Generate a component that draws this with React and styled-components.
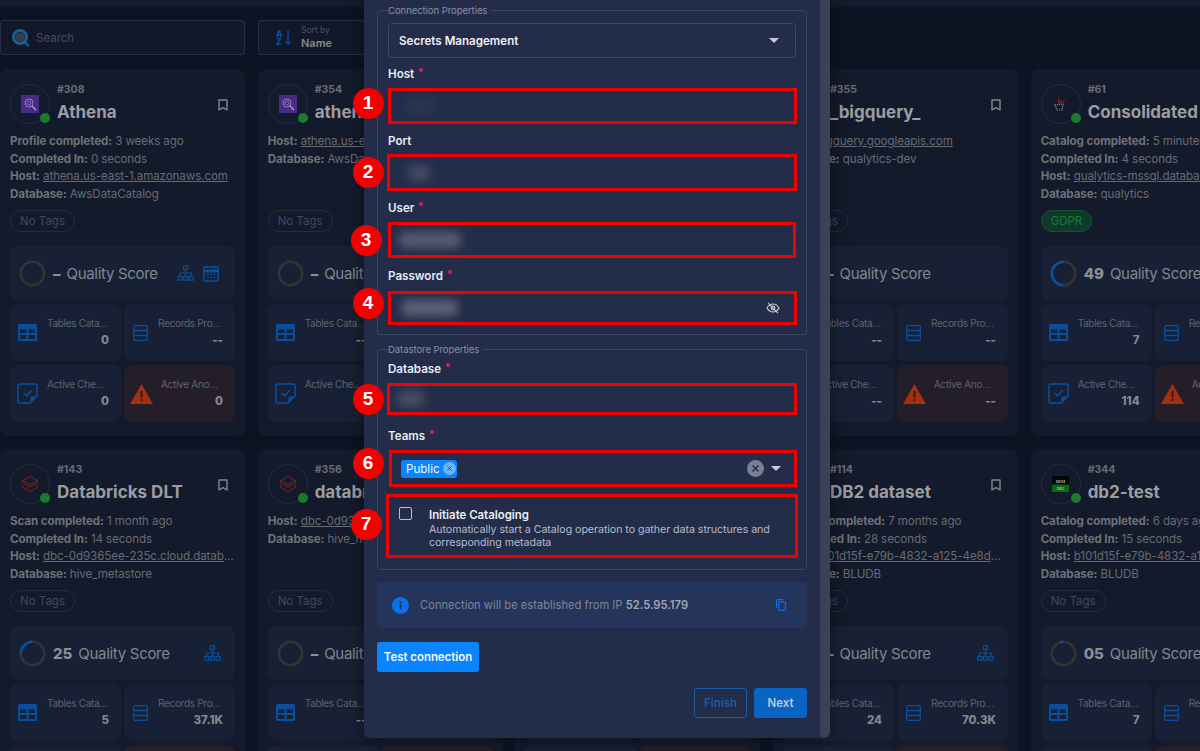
import React from 'react';
import styled, { createGlobalStyle } from 'styled-components';

const GlobalStyle = createGlobalStyle`
html, body {
  margin: 0;
  width: 100%;
  height: 100%;
  overflow: hidden;
  background: #0d1322;
}
#root {
  width: 100%;
  height: 100%;
}
* {
  box-sizing: border-box;
}
`;

const Page = styled.div`
  position: relative;
  width: 1200px;
  height: 751px;
  overflow: hidden;
  font-family: Inter, "Liberation Sans", sans-serif;
`;

const TopBar = styled.div`
  height: 7px;
  background: #141a2c;
`;

const Toolbar = styled.div`
  display: flex;
  gap: 13px;
  padding-top: 13px;
  height: 62px;
`;

const ToolBox = styled.div`
  display: flex;
  align-items: center;
  width: 245px;
  height: 35px;
  background: #121829;
  border: 1px solid #272f44;
  border-radius: 3px;
  padding-left: ${(p) => p.$pad}px;
`;

const SearchText = styled.span`
  margin-left: 5px;
  font-size: 11.5px;
  color: #454b5c;
`;

const SortText = styled.div`
  display: flex;
  flex-direction: column;
  margin-left: 9px;
`;

const SortLabel = styled.span`
  font-size: 8.5px;
  line-height: 11px;
  color: #4c5262;
`;

const SortValue = styled.span`
  font-size: 11px;
  line-height: 14px;
  font-weight: 600;
  color: #85888f;
`;

const CardGrid = styled.div`
  display: grid;
  grid-template-columns: repeat(5, 245px);
  column-gap: 12.67px;
  row-gap: 13px;
`;

const Card = styled.div`
  height: 367px;
  padding: 15px 10px 0;
  background: #131a2b;
  border-radius: 8px;
`;

const CardHeader = styled.div`
  display: flex;
  height: 40px;
`;

const Avatar = styled.div`
  position: relative;
  flex: none;
  display: flex;
  align-items: center;
  justify-content: center;
  width: 40px;
  height: 40px;
  border: 1px solid #252c3e;
  border-radius: 50%;
`;

const StatusDot = styled.span`
  position: absolute;
  right: -1px;
  bottom: 0;
  width: 10px;
  height: 10px;
  border-radius: 50%;
  background: #1a7a2e;
`;

const NameColumn = styled.div`
  min-width: 0;
  margin-left: 7px;
  margin-top: -1px;
`;

const CardId = styled.div`
  font-size: 10.5px;
  line-height: 14px;
  font-weight: 700;
  color: #6a6c73;
`;

const CardName = styled.div`
  margin-top: 3px;
  width: 155px;
  font-size: 17px;
  line-height: 24px;
  font-weight: 700;
  white-space: nowrap;
  color: #9c9da1;
`;

const BookmarkSlot = styled.div`
  display: flex;
  align-items: center;
  margin-left: auto;
  padding-right: 7px;
  margin-top: 1px;
`;

const InfoList = styled.div`
  height: 70px;
  margin-top: 9px;
`;

const InfoLine = styled.div`
  font-size: 11.6px;
  line-height: 17.6px;
  color: #696b72;
  white-space: nowrap;
  overflow: hidden;
  text-overflow: ellipsis;
  letter-spacing: -0.1px;
`;

const InfoKey = styled.b`
  font-weight: 700;
  color: #6f7177;
`;

const InfoLink = styled.span`
  text-decoration: underline;
`;

const Tag = styled.span`
  display: inline-flex;
  align-items: center;
  height: 22px;
  margin-top: 7px;
  padding: 0 9px;
  border-radius: 11px;
  font-size: 11.5px;
  border: 1px solid ${(p) => (p.$green ? '#14532f' : '#252c3e')};
  background: ${(p) => (p.$green ? '#0f3a29' : 'transparent')};
  color: ${(p) => (p.$green ? '#137a3a' : '#3f4860')};
`;

const QualityPanel = styled.div`
  display: flex;
  align-items: center;
  height: 54px;
  margin-top: 14px;
  padding: 0 14px 0 9px;
  background: #172035;
  border-radius: 8px;
`;

const QualityScore = styled.b`
  margin-left: 7px;
  font-size: 15px;
  font-weight: 800;
  color: #8d8f95;
`;

const QualityLabel = styled.span`
  margin-left: 6px;
  font-size: 15px;
  letter-spacing: -0.3px;
  white-space: nowrap;
  color: #82868f;
`;

const QualityIcons = styled.div`
  display: flex;
  align-items: center;
  gap: 9px;
  margin-left: auto;
  padding-right: ${(p) => (p.$double ? 2 : 0)}px;
`;

const StatGrid = styled.div`
  display: grid;
  grid-template-columns: 111px 111px;
  grid-auto-rows: 57px;
  gap: 4px 3px;
  margin-top: 4px;
`;

const StatTile = styled.div`
  display: flex;
  align-items: center;
  padding: 0 12px 0 ${(p) => p.$pad}px;
  border-radius: 8px;
  background: ${(p) => (p.$alert ? '#231e29' : '#172035')};
`;

const StatBody = styled.div`
  flex: 1;
  min-width: 0;
  margin-top: -2px;
  display: flex;
  flex-direction: column;
  align-items: flex-end;
`;

const StatTitle = styled.div`
  max-width: ${(p) => p.$max}px;
  font-size: 10px;
  line-height: 14px;
  margin-bottom: 3px;
  letter-spacing: -0.3px;
  white-space: nowrap;
  overflow: hidden;
  text-overflow: ellipsis;
  color: #5f636e;
`;

const StatValue = styled.div`
  font-size: 11.5px;
  line-height: 14px;
  font-weight: 800;
  color: #85878d;
`;

const Modal = styled.div`
  position: absolute;
  left: 364px;
  top: 0;
  width: 466px;
  height: 738px;
  display: flex;
  overflow: hidden;
  background: #232c48;
  border-radius: 0 0 6px 6px;
  box-shadow: 0 0 18px rgba(0, 0, 0, 0.45);
`;

const ModalBody = styled.div`
  width: 456px;
  padding: 4px 13px 0;
`;

const ScrollTrack = styled.div`
  width: 10px;
  height: 100%;
  background: #3a4258;
  border-radius: 0 0 5px 5px;
`;

const Group = styled.fieldset`
  margin: ${(p) => p.$top}px 0 0;
  padding: 0 10px ${(p) => p.$bottom}px;
  min-width: 0;
  border: 1px solid #3c4560;
  border-radius: 4px;
`;

const GroupTitle = styled.legend`
  padding: 1px 3px 0 0;
  margin-left: 0;
  font-size: 9.6px;
  line-height: 12px;
  letter-spacing: -0.1px;
  color: #8a90a1;
`;

const SelectBox = styled.div`
  display: flex;
  align-items: center;
  justify-content: space-between;
  height: 35px;
  margin-top: 6px;
  padding: 0 16px 0 10px;
  border: 1px solid #3f4860;
  border-radius: 4px;
  font-size: 11.6px;
  font-weight: 600;
  color: #eef0f5;
`;

const Caret = styled.span`
  display: inline-block;
  width: 0;
  height: 0;
  border-left: 5px solid transparent;
  border-right: 5px solid transparent;
  border-top: 5px solid #c7cbd8;
`;

const FieldLabel = styled.div`
  display: flex;
  height: 16px;
  margin-top: ${(p) => p.$top}px;
  font-size: 11.6px;
  line-height: 16px;
  font-weight: 600;
  color: #e8ebf2;
`;

const RequiredDot = styled.span`
  width: 4px;
  height: 4px;
  margin: 2px 0 0 5px;
  border-radius: 50%;
  background: #e0195f;
`;

const Highlight = styled.div`
  display: flex;
  align-items: center;
  height: ${(p) => p.$height}px;
  margin: ${(p) => p.$top}px ${(p) => p.$right ?? -1}px 0 ${(p) => p.$left ?? 0}px;
  border: 3px solid #f50000;
`;

const BlurredValue = styled.span`
  display: block;
  width: ${(p) => p.$width}px;
  height: 16px;
  margin-left: ${(p) => p.$left}px;
  background: #6a7084;
  opacity: ${(p) => p.$strength};
  filter: blur(5px);
  border-radius: 4px;
`;

const EyeSlot = styled.div`
  display: flex;
  margin-left: auto;
  margin-right: 14px;
`;

const Chip = styled.span`
  display: flex;
  align-items: center;
  height: 18px;
  margin-left: 9px;
  padding: 0 1px 0 5px;
  gap: 3px;
  background: #0a84ff;
  border-radius: 3px;
  font-size: 11.6px;
  color: #f0f6ff;
`;

const ClearSlot = styled.div`
  display: flex;
  margin-left: auto;
  margin-right: 7px;
`;

const CaretSlot = styled.div`
  display: flex;
  margin-right: 13px;
`;

const CatalogRow = styled.div`
  display: flex;
  height: 64px;
  margin: 7px -2px 0 -2px;
  padding: 11px 20px 0 10px;
  border: 3px solid #f50000;
`;

const CheckBox = styled.span`
  flex: none;
  width: 13px;
  height: 13px;
  margin-top: -1px;
  border: 1.5px solid #bdc1cc;
  border-radius: 2px;
`;

const CatalogText = styled.div`
  margin-left: 17px;
`;

const CatalogTitle = styled.div`
  font-size: 11.4px;
  line-height: 14px;
  font-weight: 600;
  color: #eef0f5;
`;

const CatalogHint = styled.div`
  margin-top: 2px;
  font-size: 10.65px;
  line-height: 12.5px;
  letter-spacing: -0.05px;
  color: #b4bccd;
`;

const InfoBar = styled.div`
  display: flex;
  align-items: center;
  height: 46px;
  margin-top: 12px;
  padding: 0 21px 0 15px;
  background: #24345a;
  border-radius: 4px;
  font-size: 11.2px;
  color: #7d8698;
`;

const InfoMessage = styled.span`
  margin-left: 11px;
`;

const IpAddress = styled.b`
  font-weight: 600;
  color: #a1a6b3;
`;

const CopySlot = styled.div`
  display: flex;
  margin-left: auto;
`;

const TestButton = styled.button`
  display: block;
  width: 102px;
  height: 30px;
  margin-top: 14px;
  padding: 0;
  border: 0;
  border-radius: 3px;
  background: #0a84ff;
  font-family: inherit;
  font-size: 11.4px;
  font-weight: 600;
  color: #f5f9ff;
`;

const FooterRow = styled.div`
  display: flex;
  justify-content: flex-end;
  gap: 7px;
  margin-top: 16px;
`;

const FooterButton = styled.button`
  width: 53px;
  height: 30px;
  padding: 0;
  border-radius: 3px;
  border: 1px solid ${(p) => (p.$solid ? '#0a64c4' : '#1a5aa8')};
  background: ${(p) => (p.$solid ? '#0a64c4' : 'transparent')};
  font-family: inherit;
  font-size: 11.4px;
  font-weight: 600;
  color: ${(p) => (p.$solid ? '#bcc8d8' : '#1e5aa3')};
`;

const StepBadge = styled.span`
  position: absolute;
  left: ${(p) => p.$x - 15.5}px;
  top: ${(p) => p.$y - 15.5}px;
  display: flex;
  align-items: center;
  justify-content: center;
  width: 31px;
  height: 31px;
  border-radius: 50%;
  background: #f50000;
  font-family: "Liberation Sans", Arial, sans-serif;
  font-size: 19px;
  font-weight: 700;
  color: #fff;
`;

const blue = '#0a4f9e';

function SearchIcon() {
  return (
    <svg width="20" height="20" viewBox="0 0 20 20" fill="none">
      <circle cx="9" cy="9" r="6.5" stroke="#1b5f8f" strokeWidth="3" />
      <circle cx="9" cy="9" r="4.6" fill="#343c4e" />
      <path d="M13.5 14l3.5 3.5" stroke="#1b5f8f" strokeWidth="2.4" strokeLinecap="round" />
    </svg>
  );
}

function SortIcon() {
  return (
    <svg width="16" height="17" viewBox="0 0 16 17" fill="none">
      <text x="0" y="7.5" fontSize="8.5" fontWeight="800" fontFamily="Inter, sans-serif" fill={blue}>A</text>
      <text x="0" y="16" fontSize="8.5" fontWeight="800" fontFamily="Inter, sans-serif" fill={blue}>Z</text>
      <path d="M12 1v14M9.4 12.4L12 15l2.6-2.6" stroke={blue} strokeWidth="1.3" />
    </svg>
  );
}

function BookmarkIcon() {
  return (
    <svg width="10" height="12" viewBox="0 0 10 12" fill="none">
      <path d="M1 1h8v10L5 8.6 1 11z" stroke="#85878d" strokeWidth="1.4" strokeLinejoin="round" />
    </svg>
  );
}

function AthenaLogo() {
  return (
    <svg width="18" height="18" viewBox="0 0 18 18">
      <rect width="18" height="18" fill="#472c86" />
      <circle cx="8" cy="8" r="4" fill="none" stroke="#a795cf" strokeWidth="0.8" />
      <circle cx="8" cy="8" r="1.8" fill="none" stroke="#a795cf" strokeWidth="0.6" />
      <path d="M11 11l4 4" stroke="#b9aad9" strokeWidth="1.1" />
    </svg>
  );
}

function DatabricksLogo() {
  return (
    <svg width="18" height="18" viewBox="0 0 18 18" fill="none" stroke="#8a2418" strokeWidth="0.9">
      <path d="M1.5 5.5L9 1.5l7.5 4L9 9.5z" />
      <path d="M1.5 5.5v2.2L9 12l7.5-4.300V5.500" />
      <path d="M1.500 10v2.200L9 16.500l7.500-4.300V10" />
    </svg>
  );
}

function ConsolidatedLogo() {
  return (
    <svg width="16" height="18" viewBox="0 0 16 18" fill="none">
      <path d="M5 1l2 5 7-1-6 3-3 1z" fill="#7d1d14" />
      <path d="M2 10l8-1-1 6H4z" stroke="#7c808a" strokeWidth="1.200" strokeDasharray="1.200 0.800" />
    </svg>
  );
}

function DbTwoLogo() {
  return (
    <svg width="17" height="16" viewBox="0 0 17 16">
      <rect width="17" height="16" rx="2" fill="#050505" />
      <rect y="8.500" width="17" height="7.500" rx="1" fill="#0a6b14" />
      <text x="8.500" y="6.500" textAnchor="middle" fontSize="4.800" fontWeight="700" fontFamily="Liberation Serif, serif" fill="#b0b0b0">IBM</text>
      <text x="8.500" y="14" textAnchor="middle" fontSize="4" fontWeight="700" fontFamily="Liberation Serif, serif" fill="#9ac09a">DB2</text>
    </svg>
  );
}

const logos = {
  athena: AthenaLogo,
  databricks: DatabricksLogo,
  consolidated: ConsolidatedLogo,
  db2: DbTwoLogo,
};

function ScoreRing({ score }) {
  const length = 2 * Math.PI * 11.7;
  const filled = score ? (score / 100) * length : 0;
  return (
    <svg width="27" height="27" viewBox="0 0 27 27" fill="none" style={{ flex: 'none' }}>
      <circle cx="13.500" cy="13.500" r="11.700" stroke="#33342f" strokeWidth="2.600" />
      <circle
        cx="13.500"
        cy="13.500"
        r="11.700"
        stroke={blue}
        strokeWidth="2.600"
        strokeDasharray={`${filled} ${length}`}
        transform="translate(27 0) scale(-1 1) rotate(-90 13.500 13.500)"
      />
    </svg>
  );
}

function HierarchyIcon() {
  return (
    <svg width="17" height="16" viewBox="0 0 17 16" fill="none" stroke={blue} strokeWidth="1.200">
      <rect x="6.500" y="0.800" width="4" height="3.600" />
      <rect x="0.800" y="11.500" width="4" height="3.600" />
      <rect x="6.500" y="11.500" width="4" height="3.600" />
      <rect x="12.200" y="11.500" width="4" height="3.600" />
      <path d="M8.500 4.400v7M2.800 11.500V8h11.400v3.500" />
    </svg>
  );
}

function CalendarIcon() {
  return (
    <svg width="16" height="17" viewBox="0 0 16 17" fill="none">
      <rect x="0.800" y="2" width="14.400" height="14" rx="1.500" stroke={blue} strokeWidth="1.500" />
      <path d="M0.800 6h14.400" stroke={blue} strokeWidth="3" />
      <path d="M4 0.500v2.500M12 0.500v2.500" stroke={blue} strokeWidth="1.400" />
      <path d="M4 9.500h1.600M7.200 9.500h1.600M10.400 9.500H12M4 12.500h1.600M7.200 12.500h1.600M10.400 12.500H12" stroke={blue} strokeWidth="1.400" />
    </svg>
  );
}

function TableIcon() {
  return (
    <svg width="19" height="17" viewBox="0 0 19 17" style={{ flex: 'none' }}>
      <path
        fill={blue}
        fillRule="evenodd"
        d="M1.500 0h16A1.500 1.500 0 0 1 19 1.500v14a1.500 1.500 0 0 1-1.500 1.500h-16A1.500 1.500 0 0 1 0 15.500v-14A1.500 1.500 0 0 1 1.500 0zM2 5.500V9h6.500V5.500zm8.500 0V9H17V5.500zM2 11v4h6.500v-4zm8.500 0v4H17v-4z"
      />
    </svg>
  );
}

function RecordsIcon() {
  return (
    <svg width="15" height="16" viewBox="0 0 15 16" fill="none" stroke={blue} strokeWidth="1.300" style={{ flex: 'none' }}>
      <rect x="0.700" y="0.700" width="13.600" height="14.600" rx="1.500" />
      <path d="M0.700 5.500h13.600M0.700 10.500h13.600" />
    </svg>
  );
}

function CheckIcon() {
  return (
    <svg width="21" height="21" viewBox="0 0 21 21" fill="none" style={{ flex: 'none' }}>
      <path
        d="M3 1h15a2 2 0 0 1 2 2v10l-7 7H3a2 2 0 0 1-2-2V3a2 2 0 0 1 2-2z"
        stroke={blue}
        strokeWidth="1.500"
      />
      <path d="M13.500 20v-5.500a1 1 0 0 1 1-1H20z" fill={blue} />
      <path d="M6.500 10l3 2.800L14.500 7.500" stroke={blue} strokeWidth="1.700" />
    </svg>
  );
}

function WarningIcon() {
  return (
    <svg width="23" height="20" viewBox="0 0 23 20" style={{ flex: 'none' }}>
      <path d="M11.500 0L23 20H0z" fill="#a2300f" />
      <rect x="10.500" y="7" width="2" height="6.500" fill="#231e29" />
      <rect x="10.500" y="15" width="2" height="2" fill="#231e29" />
    </svg>
  );
}

function EyeOffIcon() {
  return (
    <svg width="14" height="12" viewBox="0 0 14 12" fill="none" stroke="#c5cad6" strokeWidth="1.200">
      <path d="M1 6c1.500-2.500 3.500-4 6-4s4.500 1.500 6 4c-1.500 2.500-3.500 4-6 4S2.500 8.500 1 6z" />
      <circle cx="7" cy="6" r="1.800" />
      <path d="M2 0.800l10 10.400" />
    </svg>
  );
}

function ChipCloseIcon() {
  return (
    <svg width="13" height="13" viewBox="0 0 13 13" fill="none">
      <circle cx="6.500" cy="6.500" r="6.500" fill="#6cb4f8" />
      <path d="M4.300 4.300l4.400 4.400M8.700 4.300l-4.400 4.400" stroke="#0a5cb8" strokeWidth="1" />
    </svg>
  );
}

function ClearIcon() {
  return (
    <svg width="17" height="17" viewBox="0 0 17 17" fill="none">
      <circle cx="8.500" cy="8.500" r="8.500" fill="#7a8093" />
      <path d="M5.500 5.500l6 6M11.500 5.500l-6 6" stroke="#232c48" strokeWidth="1.400" />
    </svg>
  );
}

function InfoIcon() {
  return (
    <svg width="17" height="17" viewBox="0 0 17 17" style={{ flex: 'none' }}>
      <circle cx="8.500" cy="8.500" r="8.500" fill="#0a6fe8" />
      <rect x="7.600" y="7.200" width="1.800" height="5.300" fill="#1e2b4e" />
      <rect x="7.600" y="4.300" width="1.800" height="1.800" fill="#1e2b4e" />
    </svg>
  );
}

function CopyIcon() {
  return (
    <svg width="10" height="12" viewBox="0 0 10 12" fill="none" stroke="#0a6fe8" strokeWidth="1.200">
      <rect x="2.800" y="2.800" width="6.500" height="8.600" rx="0.800" />
      <path d="M0.600 9V1.400a0.800 0.800 0 0 1 0.800-0.800H7" />
    </svg>
  );
}

const cards = [
  {
    id: '#308',
    name: 'Athena',
    logo: 'athena',
    info: [
      ['Profile completed:', '3 weeks ago'],
      ['Completed In:', '0 seconds'],
      ['Host:', 'athena.us-east-1.amazonaws.com', true],
      ['Database:', 'AwsDataCatalog'],
    ],
    icons: ['tree', 'calendar'],
    stats: ['0', '--', '0', '0'],
  },
  {
    id: '#354',
    name: 'athena_test',
    logo: 'athena',
    info: [
      ['Host:', 'athena.us-east-1.amazonaws.com', true],
      ['Database:', 'AwsDataCatalog'],
    ],
    stats: ['--', '--', '--', '--'],
  },
  {
    id: '#352',
    name: 'bigquery',
    logo: 'db2',
    info: [['Database:', 'qualytics-dev']],
    stats: ['--', '--', '--', '--'],
  },
  {
    id: '#355',
    name: '_bigquery_',
    logo: 'db2',
    info: [
      ['Host:', 'bigquery.googleapis.com', true],
      ['Database:', 'qualytics-dev'],
    ],
    stats: ['--', '--', '--', '--'],
  },
  {
    id: '#61',
    name: 'Consolidated Balance',
    logo: 'consolidated',
    info: [
      ['Catalog completed:', '5 minutes ago'],
      ['Completed In:', '4 seconds'],
      ['Host:', 'qualytics-mssql.database.windows.net', true],
      ['Database:', 'qualytics'],
    ],
    tag: 'GDPR',
    score: 49,
    stats: ['7', '--', '114', '--'],
  },
  {
    id: '#143',
    name: 'Databricks DLT',
    logo: 'databricks',
    info: [
      ['Scan completed:', '1 month ago'],
      ['Completed In:', '14 seconds'],
      ['Host:', 'dbc-0d9365ee-235c.cloud.databricks.com', true],
      ['Database:', 'hive_metastore'],
    ],
    score: 25,
    icons: ['tree'],
    stats: ['5', '37.1K', '--', '--'],
  },
  {
    id: '#356',
    name: 'databricks_test',
    logo: 'databricks',
    info: [
      ['Host:', 'dbc-0d9365ee-235c.cloud.databricks.com', true],
      ['Database:', 'hive_metastore'],
    ],
    stats: ['--', '--', '--', '--'],
  },
  {
    id: '#353',
    name: 'db2',
    logo: 'db2',
    info: [['Database:', 'BLUDB']],
    stats: ['--', '--', '--', '--'],
  },
  {
    id: '#114',
    name: 'DB2 dataset',
    logo: 'db2',
    info: [
      ['Profile completed:', '7 months ago'],
      ['Completed In:', '28 seconds'],
      ['Host:', 'b101d15f-e79b-4832-a125-4e8d4d1f0c2a.databases', true],
      ['Database:', 'BLUDB'],
    ],
    icons: ['tree'],
    stats: ['24', '70.3K', '--', '--'],
  },
  {
    id: '#344',
    name: 'db2-test',
    logo: 'db2',
    info: [
      ['Catalog completed:', '6 days ago'],
      ['Completed In:', '15 seconds'],
      ['Host:', 'b101d15f-e79b-4832-a125-4e8d4d1f0c2a.databases', true],
      ['Database:', 'BLUDB'],
    ],
    score: 5,
    stats: ['7', '--', '--', '--'],
  },
];

const steps = [
  [368, 103],
  [368, 172],
  [366, 240],
  [368, 303],
  [368, 399],
  [368, 463],
  [366, 524],
];

function Stat({ icon, title, value, pad, max, alert }) {
  return (
    <StatTile $pad={pad} $alert={alert}>
      {icon}
      <StatBody>
        <StatTitle $max={max}>{title}</StatTitle>
        <StatValue>{value}</StatValue>
      </StatBody>
    </StatTile>
  );
}

function DatastoreCard({ card }) {
  const Logo = logos[card.logo];
  const icons = card.icons || [];
  const score = card.score ? String(card.score).padStart(2, '0') : '–';
  return (
    <Card>
      <CardHeader>
        <Avatar>
          <Logo />
          <StatusDot />
        </Avatar>
        <NameColumn>
          <CardId>{card.id}</CardId>
          <CardName>{card.name}</CardName>
        </NameColumn>
        <BookmarkSlot>
          <BookmarkIcon />
        </BookmarkSlot>
      </CardHeader>
      <InfoList>
        {card.info.map(([key, value, link]) => (
          <InfoLine key={key}>
            <InfoKey>{key}</InfoKey> {link ? <InfoLink>{value}</InfoLink> : value}
          </InfoLine>
        ))}
      </InfoList>
      <Tag $green={!!card.tag}>{card.tag || 'No Tags'}</Tag>
      <QualityPanel>
        <ScoreRing score={card.score} />
        <QualityScore>{score}</QualityScore>
        <QualityLabel>Quality Score</QualityLabel>
        <QualityIcons $double={icons.length > 1}>
          {icons.map((name) =>
            name === 'tree' ? <HierarchyIcon key={name} /> : <CalendarIcon key={name} />
          )}
        </QualityIcons>
      </QualityPanel>
      <StatGrid>
        <Stat icon={<TableIcon />} title="Tables Cataloged" value={card.stats[0]} pad={8} max={62} />
        <Stat icon={<RecordsIcon />} title="Records Profiled" value={card.stats[1]} pad={9} max={65} />
        <Stat icon={<CheckIcon />} title="Active Checks Count" value={card.stats[2]} pad={7} max={62} />
        <Stat icon={<WarningIcon />} title="Active Anomalies" value={card.stats[3]} pad={6} max={62} alert />
      </StatGrid>
    </Card>
  );
}

function Field({ label, required, top, gap, height, left, right, children }) {
  return (
    <>
      <FieldLabel $top={top}>
        {label}
        {required && <RequiredDot />}
      </FieldLabel>
      <Highlight $top={gap} $height={height} $left={left} $right={right}>
        {children}
      </Highlight>
    </>
  );
}

export default function App() {
  return (
    <Page>
      <GlobalStyle />
      <TopBar />
      <Toolbar>
        <ToolBox $pad={10}>
          <SearchIcon />
          <SearchText>Search</SearchText>
        </ToolBox>
        <ToolBox $pad={17}>
          <SortIcon />
          <SortText>
            <SortLabel>Sort by</SortLabel>
            <SortValue>Name</SortValue>
          </SortText>
        </ToolBox>
      </Toolbar>
      <CardGrid>
        {cards.map((card) => (
          <DatastoreCard key={card.id} card={card} />
        ))}
      </CardGrid>

      <Modal>
        <ModalBody>
          <Group $top={0} $bottom={9}>
            <GroupTitle>Connection Properties</GroupTitle>
            <SelectBox>
              Secrets Management
              <Caret />
            </SelectBox>
            <Field label="Host" required top={8} gap={6} height={36}>
              <BlurredValue $width={30} $left={15} $strength={0.12} />
            </Field>
            <Field label="Port" top={9} gap={5} height={37} left={-1}>
              <BlurredValue $width={22} $left={18} $strength={0.45} />
            </Field>
            <Field label="User" required top={9} gap={6} height={36} right={0}>
              <BlurredValue $width={62} $left={8} $strength={0.7} />
            </Field>
            <Field label="Password" required top={10} gap={7} height={34}>
              <BlurredValue $width={56} $left={11} $strength={0.8} />
              <EyeSlot>
                <EyeOffIcon />
              </EyeSlot>
            </Field>
          </Group>
          <Group $top={8} $bottom={11}>
            <GroupTitle>Datastore Properties</GroupTitle>
            <Field label="Database" required top={5} gap={6} height={32} left={-1}>
              <BlurredValue $width={26} $left={8} $strength={0.5} />
            </Field>
            <Field label="Teams" required top={13} gap={6} height={37} left={1}>
              <Chip>
                Public
                <ChipCloseIcon />
              </Chip>
              <ClearSlot>
                <ClearIcon />
              </ClearSlot>
              <CaretSlot>
                <Caret />
              </CaretSlot>
            </Field>
            <CatalogRow>
              <CheckBox />
              <CatalogText>
                <CatalogTitle>Initiate Cataloging</CatalogTitle>
                <CatalogHint>
                  Automatically start a Catalog operation to gather data structures and corresponding metadata
                </CatalogHint>
              </CatalogText>
            </CatalogRow>
          </Group>
          <InfoBar>
            <InfoIcon />
            <InfoMessage>
              Connection will be established from IP <IpAddress>52.5.95.179</IpAddress>
            </InfoMessage>
            <CopySlot>
              <CopyIcon />
            </CopySlot>
          </InfoBar>
          <TestButton>Test connection</TestButton>
          <FooterRow>
            <FooterButton>Finish</FooterButton>
            <FooterButton $solid>Next</FooterButton>
          </FooterRow>
        </ModalBody>
        <ScrollTrack />
      </Modal>

      {steps.map(([x, y], index) => (
        <StepBadge key={index} $x={x} $y={y}>
          {index + 1}
        </StepBadge>
      ))}
    </Page>
  );
}
